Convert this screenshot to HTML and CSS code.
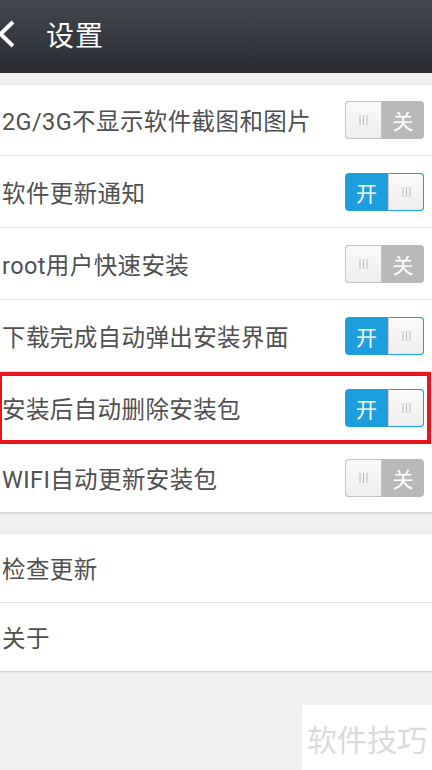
FILE: index.html
```html
<!DOCTYPE html>
<html lang="zh-CN">
<head>
  <meta charset="UTF-8" />
  <meta name="viewport" content="width=device-width, initial-scale=1.0" />
  <title>设置</title>
  <link rel="stylesheet" href="styles.css">
</head>
<body>
  <header class="topbar">
    <svg class="back" width="17" height="28" viewBox="0 0 17 28">
      <polyline points="15,2 2.5,14 15,26" fill="none" stroke="#fff" stroke-width="4" stroke-linejoin="miter" />
    </svg>
    <h1>设置</h1>
  </header>
  <main>
    <section class="group">
      <div class="row">
        <span class="title">2G/3G不显示软件截图和图片</span>
        <span class="switch off"><span class="knob"><svg width="9" height="10" viewBox="0 0 9 10"><path d="M1 0v10M4.5 0v10M8 0v10" stroke="#bbb" stroke-width="1"/></svg></span><span class="label">关</span></span>
      </div>
      <div class="row">
        <span class="title">软件更新通知</span>
        <span class="switch on"><span class="label">开</span><span class="knob"><svg width="9" height="10" viewBox="0 0 9 10"><path d="M1 0v10M4.5 0v10M8 0v10" stroke="#bbb" stroke-width="1"/></svg></span></span>
      </div>
      <div class="row">
        <span class="title">root用户快速安装</span>
        <span class="switch off"><span class="knob"><svg width="9" height="10" viewBox="0 0 9 10"><path d="M1 0v10M4.5 0v10M8 0v10" stroke="#bbb" stroke-width="1"/></svg></span><span class="label">关</span></span>
      </div>
      <div class="row">
        <span class="title">下载完成自动弹出安装界面</span>
        <span class="switch on"><span class="label">开</span><span class="knob"><svg width="9" height="10" viewBox="0 0 9 10"><path d="M1 0v10M4.5 0v10M8 0v10" stroke="#bbb" stroke-width="1"/></svg></span></span>
      </div>
      <div class="row marked">
        <span class="title">安装后自动删除安装包</span>
        <span class="switch on"><span class="label">开</span><span class="knob"><svg width="9" height="10" viewBox="0 0 9 10"><path d="M1 0v10M4.5 0v10M8 0v10" stroke="#bbb" stroke-width="1"/></svg></span></span>
      </div>
      <div class="row">
        <span class="title">WIFI自动更新安装包</span>
        <span class="switch off"><span class="knob"><svg width="9" height="10" viewBox="0 0 9 10"><path d="M1 0v10M4.5 0v10M8 0v10" stroke="#bbb" stroke-width="1"/></svg></span><span class="label">关</span></span>
      </div>
    </section>
    <section class="group">
      <div class="row short"><span class="title">检查更新</span></div>
      <div class="row short"><span class="title">关于</span></div>
    </section>
  </main>
  <div class="watermark">软件技巧</div>
</body>
</html>
```

FILE: styles.css
```css
:root {
  --bg: #f0f0f0;
  --text: #505050;
  --line: #e2e2e2;
  --blue: #1c9fdc;
  --grey: #b9b9b9;
}
* { box-sizing: border-box; margin: 0; padding: 0; }
html, body { height: 100%; }
body {
  font-family: Roboto, "Noto Sans CJK SC", sans-serif;
  background: var(--bg);
  color: var(--text);
  width: 432px;
  height: 770px;
  overflow: hidden;
  position: relative;
}
.topbar {
  height: 73px;
  display: flex;
  align-items: center;
  padding-bottom: 6px;
  background: linear-gradient(#45474f, #2a2c32);
}
.back { margin-left: -2px; flex-shrink: 0; }
.topbar h1 {
  margin-left: 31px;
  font-size: 28px;
  font-weight: 400;
  color: #fff;
  letter-spacing: 1px;
}
main { padding-top: 11px; }
.group {
  background: #fff;
  border-top: 1px solid #e8e8e8;
  border-bottom: 1px solid #d6d6d6;
  box-shadow: 0 1px 1px rgba(0,0,0,0.05);
}
.group + .group { margin-top: 20px; }
.row {
  height: 72px;
  display: flex;
  align-items: center;
  justify-content: space-between;
  padding: 0 8px 0 2px;
  border-bottom: 1px solid var(--line);
  position: relative;
}
.row:first-child { height: 71px; }
.row:last-child { border-bottom: none; height: 68px; }
.row.short { height: 69px; }
.row.short:last-child { height: 68px; }
.title {
  font-size: 23.5px;
  letter-spacing: 0.4px;
}
/* red mark around the highlighted row */
.row.marked::after {
  content: '';
  position: absolute;
  left: -2px;
  right: 1px;
  top: 0;
  bottom: -1px;
  border: 4px solid #e8141b;
}
.switch {
  display: flex;
  width: 79px;
  height: 38px;
  border-radius: 4px;
  overflow: hidden;
  font-family: "Noto Sans CJK SC", sans-serif;
}
.switch .label {
  flex: 1;
  display: flex;
  align-items: center;
  justify-content: center;
  color: #fff;
  font-size: 21px;
}
.switch .knob {
  width: 37px;
  display: flex;
  align-items: center;
  justify-content: center;
  background: linear-gradient(#fafafa, #eeeeee);
  border: 1px solid #cfcfcf;
}
.switch.off { background: var(--grey); }
.switch.off .knob { border-radius: 4px 0 0 4px; border-color: #c4c4c4; }
.switch.on { background: var(--blue); }
.switch.on .knob { width: 36px; border-radius: 0 4px 4px 0; border-color: #1c9fdc; border-left-color: #d0d0d0; }
.watermark {
  position: absolute;
  right: 0;
  bottom: 0;
  width: 130px;
  height: 65px;
  background: #fff;
  color: #dadada;
  font-family: "Noto Sans CJK SC", sans-serif;
  font-size: 30px;
  display: flex;
  align-items: center;
  justify-content: center;
}
```
